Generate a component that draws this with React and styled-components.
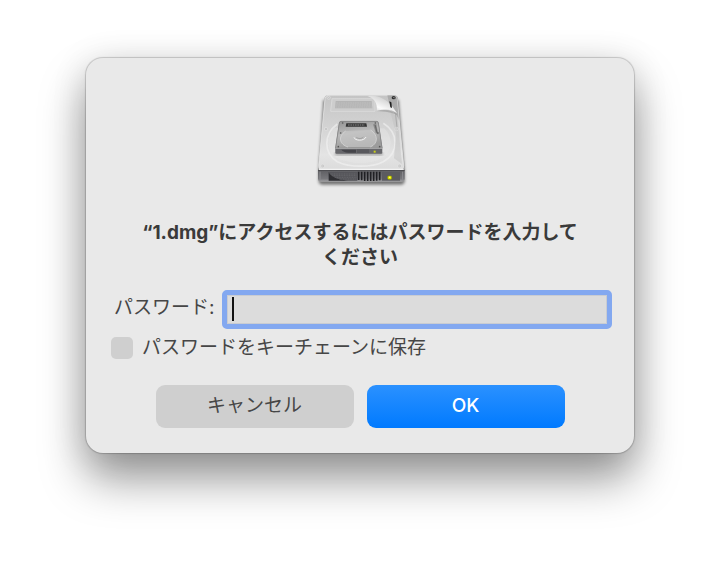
import React, { useState } from 'react';
import styled, { createGlobalStyle } from 'styled-components';

const App = () => {
    const [password, setPassword] = useState('');
    const [remember, setRemember] = useState(false);
    return (
        <>
            <GlobalStyle />
            <StyledPage>
                <StyledDialog role="dialog" aria-labelledby="title" onSubmit={(e) => e.preventDefault()}>
                    <DiskIcon />
                    <StyledTitle id="title">“1.dmg”にアクセスするにはパスワードを入力してください</StyledTitle>
                    <StyledField>
                        <StyledLabel htmlFor="password">パスワード:</StyledLabel>
                        <StyledInputWrap>
                            <StyledInput
                                id="password"
                                type="password"
                                value={password}
                                onChange={(e) => setPassword(e.target.value)}
                            />
                            {password === '' && <StyledCaret />}
                        </StyledInputWrap>
                    </StyledField>
                    <StyledRemember>
                        <StyledCheckbox
                            id="remember"
                            type="checkbox"
                            checked={remember}
                            onChange={(e) => setRemember(e.target.checked)}
                        />
                        <label htmlFor="remember">パスワードをキーチェーンに保存</label>
                    </StyledRemember>
                    <StyledButtons>
                        <StyledButton type="button">キャンセル</StyledButton>
                        <StyledButton type="submit" $primary>OK</StyledButton>
                    </StyledButtons>
                </StyledDialog>
            </StyledPage>
        </>
    );
};

const DiskIcon = () => (
    <StyledIcon viewBox="30 30 300 300" aria-hidden="true">
        <defs>
            <linearGradient id="top" x1="0" y1="0" x2="0" y2="1">
                <stop offset="0" stopColor="#c4c4c4" />
                <stop offset="0.45" stopColor="#d4d4d4" />
                <stop offset="0.8" stopColor="#e4e4e4" />
                <stop offset="1" stopColor="#dcdcdc" />
            </linearGradient>
            <linearGradient id="front" x1="0" y1="0" x2="0" y2="1">
                <stop offset="0" stopColor="#5e5e62" />
                <stop offset="0.75" stopColor="#77777b" />
                <stop offset="1" stopColor="#a4a4a6" />
            </linearGradient>
            <linearGradient id="small" x1="0" y1="0" x2="0.3" y2="1">
                <stop offset="0" stopColor="#949494" />
                <stop offset="0.5" stopColor="#bababa" />
                <stop offset="1" stopColor="#9c9c9c" />
            </linearGradient>
            <linearGradient id="curl" x1="0" y1="1" x2="0.7" y2="0">
                <stop offset="0" stopColor="#b4b4b4" />
                <stop offset="0.4" stopColor="#fbfbfb" />
                <stop offset="1" stopColor="#c4c4c4" />
            </linearGradient>
            <filter id="soft" x="-20%" y="-20%" width="140%" height="140%">
                <feGaussianBlur stdDeviation="4" />
            </filter>
        </defs>
        <path d="M70 60H296L314 280V305Q312 314 302 314H68Q58 314 56 305V270Z" fill="#000" opacity="0.5" filter="url(#soft)" />
        {/* case */}
        <path d="M84 46H282Q292 46 294 56L314 258V272H54V258L73 56Q75 46 84 46Z" fill="#a4a4a4" />
        <path d="M84 46H280Q289 46 291 56L311 256Q312 268 304 268H63Q55 268 56 256L75 56Q77 46 84 46Z" fill="url(#top)" stroke="#ececec" strokeWidth="2" />
        <path d="M262 46H280Q290 47 291 57L297 122Q292 103 272 90Z" fill="#9a9a9a" opacity="0.6" />
        <path d="M96 56H225V94H92Z" fill="#cdcdcd" stroke="#dfdfdf" strokeWidth="2" />
        <path d="M107 63H215L217 85H105Z" fill="#b5b5b5" />
        <path d="M109 69H214M108 75H215M107 81H216" stroke="#c5c5c5" strokeWidth="2" strokeDasharray="5 2" />
        <path d="M112 132C70 163 70 220 112 245C150 263 215 263 250 245C298 219 296 158 250 130" fill="none" stroke="#f3f3f3" strokeWidth="5" opacity="0.6" />
        <path d="M103 144C71 177 83 219 119 238C158 254 217 252 246 234C280 210 279 172 253 145" fill="#e8e8e8" opacity="0.4" />
        <path d="M270 92L292 112L306 252L282 235L288 160Z" fill="#bebebe" opacity="0.45" />
        <path d="M286 95L291 144" stroke="#aaa" strokeWidth="3" />
        {[[86, 53], [78, 147], [290, 147], [68, 258], [299, 258]].map(([x, y]) => (
            <g key={`${x}-${y}`}>
                <circle cx={x} cy={y} r="5" fill="#bdbdbd" stroke="#ececec" strokeWidth="1.5" />
                <circle cx={x} cy={y} r="2" fill="#dcdcdc" />
            </g>
        ))}
        {/* peeled corner */}
        <path d="M203 48C221 55 233 67 230 92C256 86 275 86 291 100L278 80C260 58 239 48 218 47Z" fill="url(#curl)" />
        <path d="M230 93C257 87 276 90 294 106C276 97 257 94 230 93Z" fill="#8b8b8b" opacity="0.5" />
        <ellipse cx="281" cy="53" rx="6" ry="5" fill="#303030" />
        <path d="M279 52L285 54" stroke="#999" strokeWidth="2" />
        <path d="M268 64L274 67L276 84L271 82Z" fill="#222" />
        {/* front panel */}
        <path d="M54 271H314V296Q314 305 304 305H64Q54 305 54 296Z" fill="url(#front)" />
        <path d="M54 271H314" stroke="#46464a" strokeWidth="3" />
        <path d="M57 268H311" stroke="#fff" strokeWidth="3" />
        <path d="M85 276H172V302H142C112 299 94 291 85 276Z" fill="#55555a" />
        <path d="M86 277C93 290 112 299 143 302H86Z" fill="#2f2f33" />
        <path d="M92 282H169M97 287H169M106 292H169M119 297H169" stroke="#77777b" strokeWidth="1.5" strokeDasharray="3 2" />
        <path d="M176 275V300M185 275V301M194 275V303M203 275V303M212 275V303M221 275V303M230 275V302M239 275V301" stroke="#202024" strokeWidth="5" />
        <rect x="246" y="276" width="54" height="26" fill="#5b5b60" />
        <rect x="263" y="288" width="12" height="10" rx="3" fill="#e8ee00" stroke="#8b9308" strokeWidth="2" />
        <rect x="267" y="290" width="4" height="4" fill="#ffff7a" />
        <path d="M60 275V299M308 275V299" stroke="#8c8c90" strokeWidth="3" />
        {/* inner drive */}
        <path d="M105 218H248V226H105Z" fill="#000" opacity="0.35" filter="url(#soft)" />
        <path d="M124 123H229Q235 123 236 129L247 202V219Q247 222 243 222H110Q106 222 106 219V202L117 129Q118 123 124 123Z" fill="#77777a" />
        <path d="M124 124H229Q234 124 235 129L246 204H107L118 129Q119 124 124 124Z" fill="url(#small)" stroke="#858585" strokeWidth="2" />
        <path d="M137 153C112 170 119 194 144 201H211C235 191 235 165 212 150" fill="#c8c8c8" opacity="0.65" />
        <path d="M137 153C112 170 119 194 144 201M211 201C235 191 235 165 212 150" fill="none" stroke="#dcdcdc" strokeWidth="2" />
        <path d="M139 130H199L201 140H137Z" fill="#333" />
        <path d="M144 135H194" stroke="#888" strokeWidth="3" strokeDasharray="5 2" />
        <path d="M162 172C164 183 193 184 198 171" fill="none" stroke="#f4f4f4" strokeWidth="3" />
        <path d="M169 172C174 177 187 177 190 171" fill="none" stroke="#8f8f8f" strokeWidth="2" />
        <path d="M219 133L229 133L235 164L227 158Z" fill="#8a8a8a" />
        <path d="M225 134L231 158" stroke="#555" strokeWidth="2" />
        {[[128, 129], [226, 129], [122, 159], [234, 159], [115, 200], [239, 200]].map(([x, y]) => (
            <circle key={`${x}-${y}`} cx={x} cy={y} r="2.5" fill="#555" />
        ))}
        <path d="M107 206H246V219H107Z" fill="#67676b" />
        <path d="M107 205H246" stroke="#c9c9c9" strokeWidth="2" />
        <path d="M124 209H168V218H145Q130 217 124 209Z" fill="#45454a" />
        <path d="M174 208V219M180 208V219M186 208V219M192 208V219M198 208V219M204 208V219" stroke="#4c4c50" strokeWidth="3" />
        <rect x="221" y="212" width="6" height="6" fill="#c9cf17" />
    </StyledIcon>
);

const GlobalStyle = createGlobalStyle`
    *{
        box-sizing: border-box;
    }
    body{
        margin: 0;
        background: #fff;
        color: #464646;
        font-family: Inter, "Noto Sans CJK JP", sans-serif;
        font-size: 19px;
        line-height: 22px;
    }
`;

const StyledPage = styled.main`
    min-height: 100vh;
    padding: 58px 86px;
    overflow: hidden;
`;

const StyledDialog = styled.form`
    display: flex;
    flex-direction: column;
    padding: 32px 22px 25px;
    border-radius: 17px;
    background: #e9e9e9;
    box-shadow: 0 0 1px 1px rgba(0, 0, 0, 0.18), 0 26px 46px rgba(0, 0, 0, 0.4), 0 4px 36px rgba(0, 0, 0, 0.12);
`;

const StyledIcon = styled.svg`
    align-self: center;
    width: 100px;
    height: 100px;
`;

const StyledTitle = styled.h1`
    margin: 30px 30px 20px;
    color: #3a3a3a;
    font-size: 19px;
    font-weight: 700;
    line-height: 25px;
    text-align: center;
`;

const StyledField = styled.div`
    display: flex;
    align-items: center;
    gap: 8px;
    padding-left: 6px;
`;

const StyledLabel = styled.label`
    padding-bottom: 4px;
    white-space: nowrap;
`;

const StyledInputWrap = styled.div`
    position: relative;
    flex: 1;
    height: 39px;
`;

const StyledInput = styled.input`
    display: block;
    width: 100%;
    height: 100%;
    padding: 0 5px;
    border: 5px solid #83a8f0;
    border-radius: 5px;
    outline: none;
    background: #dcdcdc;
    box-shadow: inset 0 0 0 1px #c9ccd2;
    color: #222;
    font: inherit;
`;

const StyledCaret = styled.span`
    position: absolute;
    top: 7px;
    left: 10px;
    width: 2px;
    height: 24px;
    background: #111;
    pointer-events: none;
`;

const StyledRemember = styled.div`
    display: flex;
    align-items: center;
    gap: 9px;
    margin-top: 8px;
    padding-left: 3px;
`;

const StyledCheckbox = styled.input`
    appearance: none;
    width: 22px;
    height: 22px;
    margin: 0;
    border-radius: 5px;
    background: #cfcfcf;
    &:checked{
        background: #0a7aff;
    }
`;

const StyledButtons = styled.div`
    display: flex;
    justify-content: center;
    gap: 13px;
    margin-top: 26px;
`;

const StyledButton = styled.button`
    flex: 0 1 198px;
    height: 43px;
    padding: 0 0 2px;
    border: none;
    border-radius: 9px;
    background: ${({ $primary }) => ($primary ? 'linear-gradient(#2b91ff, #007aff)' : '#cfcfcf')};
    color: ${({ $primary }) => ($primary ? '#fff' : '#464646')};
    font: inherit;
    font-weight: ${({ $primary }) => ($primary ? 500 : 400)};
`;

export default App;
